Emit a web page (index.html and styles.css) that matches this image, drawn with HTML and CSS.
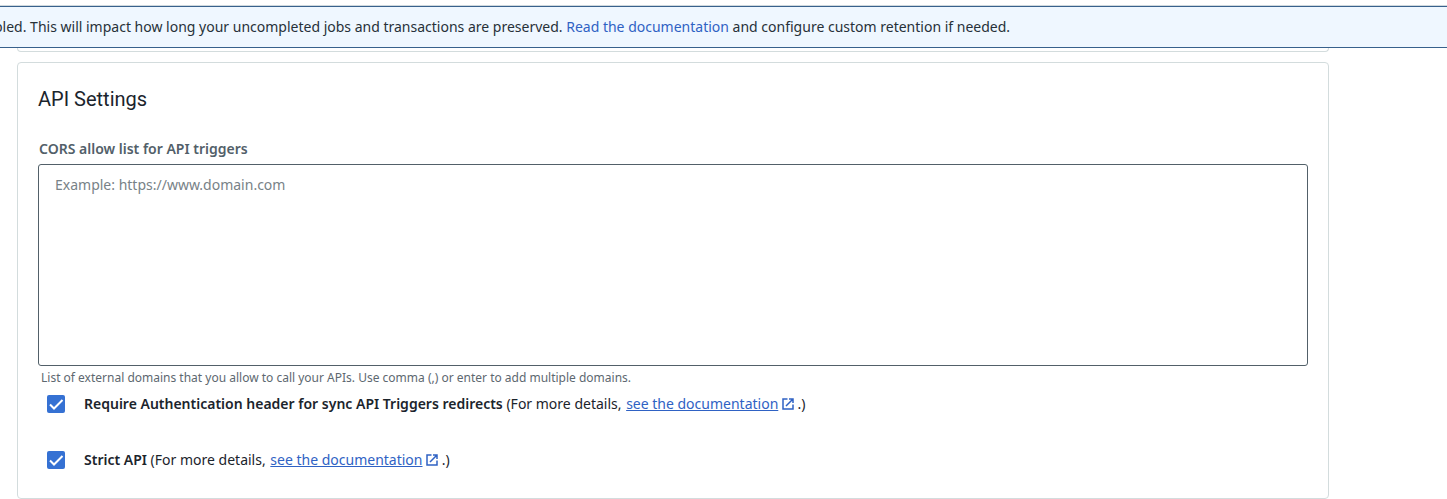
FILE: index.html
```html
<!DOCTYPE html>
<html lang="en">
<head>
  <meta charset="UTF-8" />
  <meta name="viewport" content="width=device-width, initial-scale=1.0" />
  <title>API Settings</title>
  <link rel="stylesheet" href="styles.css">
</head>
<body>

  <div class="topbar"></div>

  <!-- Retention notice -->
  <div class="banner">
    <p class="banner-text">bled. This will impact how long your uncompleted jobs and transactions are preserved. <a href="#">Read the documentation</a> and configure custom retention if needed.</p>
  </div>

  <main class="content">
    <div class="card-end"></div>

    <section class="card">
      <h2>API Settings</h2>

      <label class="field-label" for="corsList">CORS allow list for API triggers</label>
      <textarea id="corsList" placeholder="Example: https://www.domain.com"></textarea>
      <p class="hint">List of external domains that you allow to call your APIs. Use comma (,) or enter to add multiple domains.</p>

      <div class="options">
        <div class="option">
          <input type="checkbox" id="requireAuth" checked />
          <div class="option-text">
            <label for="requireAuth">Require Authentication header for sync API Triggers redirects</label>
            (For more details,
            <a href="#">see the documentation</a>
            <svg class="external" viewBox="0 0 12 12" aria-hidden="true"><path d="M5.5 1H1v10h10V6.5M7 1h4v4M11 1L4 8" /></svg>
            .)
          </div>
        </div>

        <div class="option">
          <input type="checkbox" id="strictApi" checked />
          <div class="option-text">
            <label for="strictApi">Strict API</label>
            (For more details,
            <a href="#">see the documentation</a>
            <svg class="external" viewBox="0 0 12 12" aria-hidden="true"><path d="M5.5 1H1v10h10V6.5M7 1h4v4M11 1L4 8" /></svg>
            .)
          </div>
        </div>
      </div>
    </section>
  </main>

</body>
</html>
```
FILE: styles.css
```css
* {
  box-sizing: border-box;
}

body {
  margin: 0;
  background: #fff;
  color: #1b242c;
  font-family: "Noto Sans", sans-serif;
  font-size: 14px;
  line-height: 20px;
}

a {
  color: #2f62c4;
}

.topbar {
  height: 6px;
  border-bottom: 1px solid #cfd8dd;
}

.banner {
  padding: 10px 0;
  overflow: hidden;
  background: #eff7ff;
  border-top: 1px solid #38618c;
  border-bottom: 1px solid #38618c;
  color: #273139;
}

.banner-text {
  margin: 0 0 0 -6px;
  white-space: nowrap;
}

.banner a {
  text-decoration: none;
}

.content {
  padding: 0 118px 0 17px;
}

/* bottom edge of the card scrolled under the banner */
.card-end {
  height: 4px;
  margin-bottom: 10px;
  border: 1px solid #d3dcdd;
  border-top: none;
  border-radius: 0 0 4px 4px;
}

.card {
  padding: 24px 20px;
  border: 1px solid #d3dcdd;
  border-radius: 4px;
}

h2 {
  margin: 0 0 28px;
  font-family: Roboto, sans-serif;
  font-size: 20px;
  font-weight: 400;
  line-height: 24px;
}

.field-label {
  display: block;
  margin-bottom: 5px;
  padding-left: 1px;
  color: #526069;
  font-weight: 600;
}

textarea {
  display: block;
  width: 100%;
  height: 202px;
  padding: 10px 16px;
  border: 1px solid #526069;
  border-radius: 3px;
  font: inherit;
  color: inherit;
  resize: none;
}

textarea::placeholder {
  color: #788287;
}

.hint {
  margin: 4px 3px;
  color: #5d6870;
  font-size: 12px;
  line-height: 16px;
}

.options {
  display: flex;
  flex-direction: column;
  gap: 28px;
}

.option {
  display: flex;
  align-items: center;
  gap: 19px;
  min-height: 28px;
  padding-left: 9px;
}

.option label {
  font-weight: 600;
}

.option a {
  margin-left: 1px;
}

input[type="checkbox"] {
  appearance: none;
  width: 18px;
  height: 18px;
  margin: 0;
  border-radius: 2px;
  background: #3571d3 url("data:image/svg+xml,%3Csvg xmlns='http://www.w3.org/2000/svg' viewBox='0 0 18 18' fill='none' stroke='white' stroke-width='2'%3E%3Cpath d='M3 9.5l4 4L15.5 5'/%3E%3C/svg%3E") center / 18px no-repeat;
}

input[type="checkbox"]:not(:checked) {
  border: 2px solid #526069;
  background: #fff;
}

.external {
  width: 12px;
  height: 12px;
  vertical-align: -1px;
  fill: none;
  stroke: #2f62c4;
  stroke-width: 1.5;
}
```
